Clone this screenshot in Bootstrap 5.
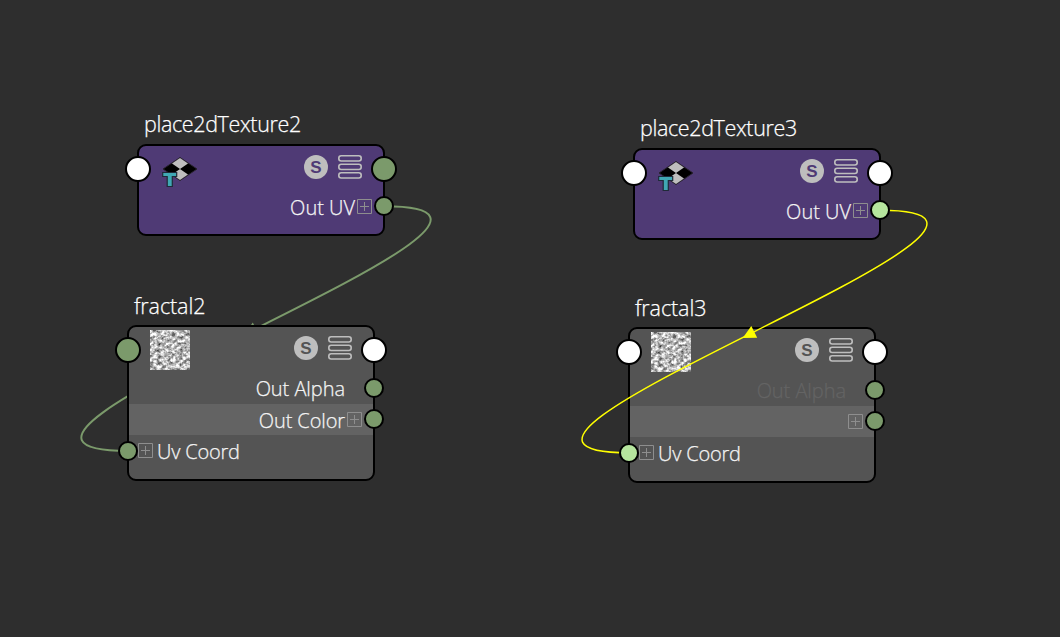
<!DOCTYPE html>
<html lang="en">
<head>
<meta charset="utf-8">
<meta name="viewport" content="width=device-width, initial-scale=1">
<title>Node Editor</title>
<link href="https://cdn.jsdelivr.net/npm/bootstrap@5.3.0/dist/css/bootstrap.min.css" rel="stylesheet">
<style>
  body { background: #2e2e2e; color: #f4f4f4; font-family: "Open Sans", "Noto Sans", sans-serif; font-weight: 300; }
  .graph { height: 637px; }
  .wires { width: 1060px; height: 637px; pointer-events: none; }
  .wires-top { z-index: 2; }
  .node { width: 248px; }
  .node-title { left: 7px; top: -35px; font-size: 21.5px; line-height: 30px; color: #fff; white-space: nowrap; }
  .fractal .node-title { top: -34px; }
  .node-body { border: 2px solid #000; border-radius: 9px; }
  .placement .node-body { height: 92px; background: #4f3a75; }
  .fractal .node-body { height: 156px; background: #545454; }
  .node-head { height: 45px; padding: 3px 21px 0 21px; }
  .tools { gap: 10px; padding-top: 6px; }
  .attr { height: 31.5px; font-size: 20px; line-height: 29px; }
  .attr-out { padding-right: 11px; gap: 1px; }
  .attr-in { padding-left: 9px; gap: 4px; }
  .attr-plain { padding-right: 28px; }
  .band { background: #636363; }
  .dim { color: #646464; }
  .pin { z-index: 3; border: 2px solid #000; border-radius: 50%; width: 26px; height: 26px; background: #fff; }
  .pin-sm { width: 20px; height: 20px; }
  .pin-l { left: -12px; }
  .pin-r { right: -12px; }
  .pin-sm.pin-l { left: -9px; }
  .pin-sm.pin-r { right: -9px; }
  .green { background: #7b9a6b; }
  .lit { background: #b6e59e; }
  .lbl { display: inline-block; white-space: nowrap; padding-top: 2px; -webkit-text-stroke: .25px currentColor; }
  .node-title .lbl { padding-top: 0; }
  .t-place { letter-spacing: -.36px; }
  .t-frac { letter-spacing: -.1px; }
  .t-uv { padding-right: 1px; }
  .t-alpha { letter-spacing: -.05px; }
  .t-color { letter-spacing: -.1px; padding-right: 1px; }
  .t-coord { letter-spacing: -.2px; }
  svg { display: block; flex: none; }
</style>
</head>
<body class="overflow-hidden">

<svg width="0" height="0" class="position-absolute">
  <defs>
    <symbol id="solo" viewBox="0 0 24 24">
      <circle cx="12" cy="12" r="12" fill="#bebebe"/>
      <text x="12" y="18" text-anchor="middle" font-family="Liberation Sans, sans-serif" font-weight="700" font-size="17" fill="var(--ink)">S</text>
    </symbol>
    <symbol id="rows" viewBox="0 0 24 24">
      <g fill="none" stroke="#bebebe" stroke-width="1.6">
        <rect x=".8" y=".8" width="22.4" height="5.2" rx="2.4"/>
        <rect x=".8" y="9.3" width="22.4" height="5.2" rx="2.4"/>
        <rect x=".8" y="17.8" width="22.4" height="5.2" rx="2.4"/>
      </g>
    </symbol>
    <symbol id="plus" viewBox="0 0 15 15">
      <path d="M.5.5h14v14H.5zM3 7.5h9M7.5 3v9" fill="none" stroke="#8e8e8e"/>
    </symbol>
    <symbol id="place" viewBox="0 0 36 32">
      <path d="M1 12 18 .5 35 12 18 23.500z" fill="#000" stroke="#2a2431"/>
      <path d="M18 1 26 6.500 18 12 10 6.500zM18 12 26 17.500 18 23 10 17.500z" fill="#bebebe"/>
      <path d="M.7 15.500h14v4H10.300v10H5.200v-10H.7z" fill="#40a8b4" stroke="#1f2a38" stroke-width="1.200"/>
    </symbol>
    <filter id="noise" x="0" y="0" width="100%" height="100%" color-interpolation-filters="sRGB">
      <feTurbulence type="fractalNoise" baseFrequency=".27 .31" numOctaves="4" seed="11"/>
      <feColorMatrix values="1.3 0 0 0 .08  1.3 0 0 0 .08  1.3 0 0 0 .08  0 0 0 0 1"/>
    </filter>
  </defs>
</svg>

<main class="graph position-relative overflow-hidden">

  <svg class="wires position-absolute top-0 start-0" viewBox="0 0 1060 637">
    <path d="M384 206.300C616 206.300-104 450.800 128 450.800" fill="none" stroke="#7b9a6b" stroke-width="2"/>
    <path d="M252.800 322.500 258.500 334.300 244.200 334.500z" fill="#7b9a6b"/>
  </svg>

  <section class="node placement position-absolute" style="left:137px;top:144px;--ink:#4f3a75">
    <div class="node-title position-absolute"><span class="lbl t-place">place2dTexture2</span></div>
    <div class="node-body">
      <div class="node-head d-flex">
        <svg class="mt-2" style="margin-left:2px" width="36" height="32"><use href="#place"/></svg>
        <div class="tools d-flex ms-auto"><svg width="24" height="24"><use href="#solo"/></svg><svg width="24" height="24"><use href="#rows"/></svg></div>
      </div>
      <div class="attr attr-out d-flex align-items-center justify-content-end"><span class="lbl t-uv">Out UV</span><svg width="15" height="15"><use href="#plus"/></svg></div>
    </div>
    <i class="pin pin-l position-absolute" style="top:12px"></i>
    <i class="pin pin-r green position-absolute" style="top:12px"></i>
    <i class="pin pin-sm pin-r green position-absolute" style="top:52px"></i>
  </section>

  <section class="node fractal position-absolute" style="left:127px;top:325px;--ink:#545454">
    <div class="node-title position-absolute"><span class="lbl t-frac">fractal2</span></div>
    <div class="node-body">
      <div class="node-head d-flex">
        <svg width="40" height="40"><rect width="40" height="40" filter="url(#noise)"/></svg>
        <div class="tools d-flex ms-auto"><svg width="24" height="24"><use href="#solo"/></svg><svg width="24" height="24"><use href="#rows"/></svg></div>
      </div>
      <div class="attr attr-plain d-flex align-items-center justify-content-end"><span class="lbl t-alpha">Out Alpha</span></div>
      <div class="attr attr-out band d-flex align-items-center justify-content-end"><span class="lbl t-color">Out Color</span><svg width="15" height="15"><use href="#plus"/></svg></div>
      <div class="attr attr-in d-flex align-items-center"><svg width="15" height="15"><use href="#plus"/></svg><span class="lbl t-coord">Uv Coord</span></div>
    </div>
    <i class="pin pin-l green position-absolute" style="top:12px"></i>
    <i class="pin pin-r position-absolute" style="top:12px"></i>
    <i class="pin pin-sm pin-r green position-absolute" style="top:53px"></i>
    <i class="pin pin-sm pin-r green position-absolute" style="top:84px"></i>
    <i class="pin pin-sm pin-l green position-absolute" style="top:116px"></i>
  </section>

  <section class="node placement position-absolute" style="left:633px;top:148px;--ink:#4f3a75">
    <div class="node-title position-absolute"><span class="lbl t-place">place2dTexture3</span></div>
    <div class="node-body">
      <div class="node-head d-flex">
        <svg class="mt-2" style="margin-left:2px" width="36" height="32"><use href="#place"/></svg>
        <div class="tools d-flex ms-auto"><svg width="24" height="24"><use href="#solo"/></svg><svg width="24" height="24"><use href="#rows"/></svg></div>
      </div>
      <div class="attr attr-out d-flex align-items-center justify-content-end"><span class="lbl t-uv">Out UV</span><svg width="15" height="15"><use href="#plus"/></svg></div>
    </div>
    <i class="pin pin-l position-absolute" style="top:12px"></i>
    <i class="pin pin-r position-absolute" style="top:12px"></i>
    <i class="pin pin-sm pin-r lit position-absolute" style="top:52px"></i>
  </section>

  <section class="node fractal position-absolute" style="left:628px;top:327px;--ink:#545454">
    <div class="node-title position-absolute"><span class="lbl t-frac">fractal3</span></div>
    <div class="node-body">
      <div class="node-head d-flex">
        <svg width="40" height="40"><rect width="40" height="40" filter="url(#noise)"/></svg>
        <div class="tools d-flex ms-auto"><svg width="24" height="24"><use href="#solo"/></svg><svg width="24" height="24"><use href="#rows"/></svg></div>
      </div>
      <div class="attr attr-plain dim d-flex align-items-center justify-content-end"><span class="lbl t-alpha">Out Alpha</span></div>
      <div class="attr attr-out band d-flex align-items-center justify-content-end"><svg width="15" height="15"><use href="#plus"/></svg></div>
      <div class="attr attr-in d-flex align-items-center"><svg width="15" height="15"><use href="#plus"/></svg><span class="lbl t-coord">Uv Coord</span></div>
    </div>
    <i class="pin pin-l position-absolute" style="top:12px"></i>
    <i class="pin pin-r position-absolute" style="top:12px"></i>
    <i class="pin pin-sm pin-r green position-absolute" style="top:53px"></i>
    <i class="pin pin-sm pin-r green position-absolute" style="top:84px"></i>
    <i class="pin pin-sm pin-l lit position-absolute" style="top:116px"></i>
  </section>

  <svg class="wires wires-top position-absolute top-0 start-0" viewBox="0 0 1060 637">
    <path d="M880 210.300C1112 210.300 397 452.800 629 452.800" fill="none" stroke="#ffff00" stroke-width="1.500"/>
    <path d="M751.300 326 757.200 337.800 742.700 338z" fill="#ffff00"/>
  </svg>
</main>

<script src="https://cdn.jsdelivr.net/npm/bootstrap@5.3.0/dist/js/bootstrap.bundle.min.js"></script>
</body>
</html>
